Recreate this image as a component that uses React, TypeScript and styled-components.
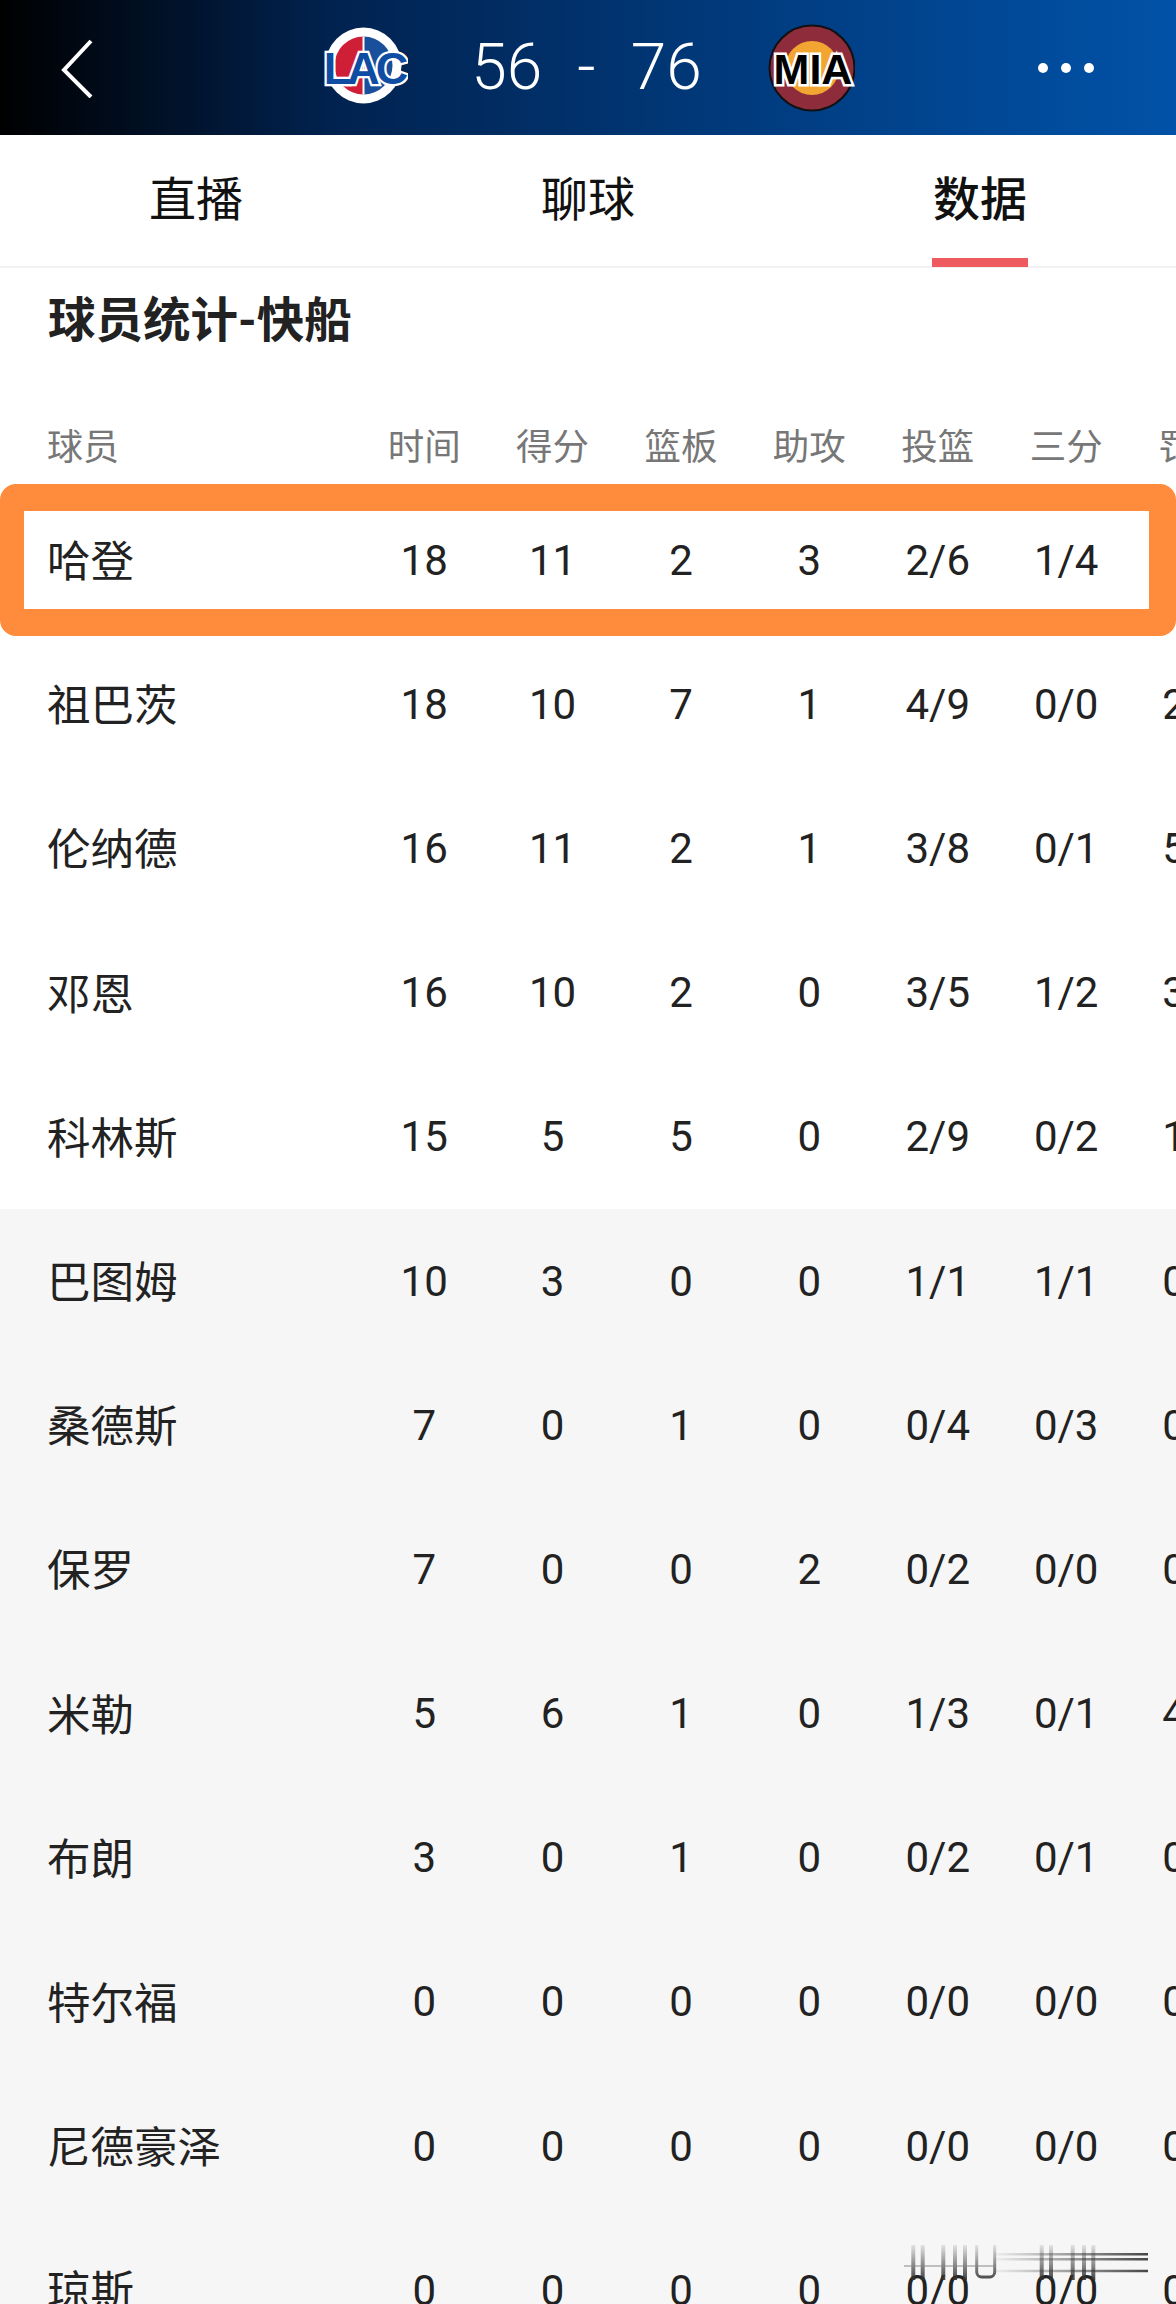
import styled, { createGlobalStyle } from "styled-components";

const GlobalStyle = createGlobalStyle`
    html, body {
        margin: 0;
        padding: 0;
        background: #fff;
    }
    body {
        font-family: Roboto, "Noto Sans CJK SC", sans-serif;
    }
`;

const Page = styled.div`
    position: relative;
    width: 1176px;
    height: 2304px;
    overflow: hidden;
    background: #fff;
`;

// Top bar with the score
const TopBar = styled.header`
    height: 135px;
    display: grid;
    grid-template-columns: 320px 88px 359px 88px 1fr;
    align-items: center;
    background: linear-gradient(90deg, #000 0%, #01224f 28%, #013a7c 62%, #0152a8 100%);
    color: #fff;
`;

const Back = styled.svg`
    width: 36px;
    height: 60px;
    margin-left: 60px;
`;

const Score = styled.div`
    font-size: 64px;
    font-weight: 300;
    text-align: center;
    white-space: pre;
    word-spacing: 2px;
    padding-right: 2px;
`;

const More = styled.div`
    display: flex;
    justify-content: flex-end;
    gap: 13px;
    padding-right: 82px;
`;

const Dot = styled.span`
    width: 10px;
    height: 10px;
    border-radius: 50%;
    background: #fff;
`;

// Tabs
const Tabs = styled.nav`
    height: 133px;
    display: grid;
    grid-template-columns: repeat(3, 392px);
    border-bottom: 2px solid #f1f1f1;
    box-sizing: border-box;
`;

const Tab = styled.div<{ $active?: boolean }>`
    position: relative;
    padding-top: 33px;
    text-align: center;
    font-size: 47px;
    line-height: 64px;
    font-weight: ${(p) => (p.$active ? 500 : 400)};
    color: #111;

    &::after {
        content: "";
        display: ${(p) => (p.$active ? "block" : "none")};
        position: absolute;
        left: 148px;
        bottom: -1px;
        width: 96px;
        height: 9px;
        background: #ee5a5e;
    }
`;

const Title = styled.h2`
    margin: 0;
    padding: 20px 0 0 48px;
    height: 132px;
    box-sizing: border-box;
    font-size: 47.5px;
    line-height: 66px;
    font-weight: 700;
    color: #222;
`;

// Stats table: first column for the name, then fixed-width stat columns
const Row = styled.div<{ $bench?: boolean; $head?: boolean }>`
    position: relative;
    height: ${(p) => (p.$head ? "88px" : "144.2px")};
    display: grid;
    grid-template-columns: 360px repeat(7, 128.4px);
    align-items: center;
    background: ${(p) => (p.$bench ? "#f6f6f6" : "transparent")};
    font-size: ${(p) => (p.$head ? "36.5px" : "42px")};
    color: ${(p) => (p.$head ? "#777" : "#222")};
`;

const Name = styled.div<{ $head?: boolean }>`
    padding: 0 0 ${(p) => (p.$head ? "0" : "3px")} 47px;
    white-space: nowrap;
    font-size: ${(p) => (p.$head ? "36px" : "43.5px")};
`;

const Cell = styled.div`
    text-align: center;
    white-space: nowrap;
`;

// Hand-drawn orange frame lying over the first row
const Highlight = styled.div`
    position: absolute;
    left: 0;
    right: 0;
    top: -4px;
    bottom: -4px;
    border: solid #fe8c3c;
    border-width: 27px 27px 27px 24px;
    border-radius: 16px;
    box-sizing: border-box;
`;

const Watermark = styled.svg`
    position: absolute;
    left: 904px;
    top: 2245px;
    width: 244px;
    height: 35px;
`;

const headers = ["球员", "时间", "得分", "篮板", "助攻", "投篮", "三分", "罚球"];

const players: string[][] = [
    ["哈登", "18", "11", "2", "3", "2/6", "1/4", ""],
    ["祖巴茨", "18", "10", "7", "1", "4/9", "0/0", "2/2"],
    ["伦纳德", "16", "11", "2", "1", "3/8", "0/1", "5/6"],
    ["邓恩", "16", "10", "2", "0", "3/5", "1/2", "3/4"],
    ["科林斯", "15", "5", "5", "0", "2/9", "0/2", "1/2"],
    ["巴图姆", "10", "3", "0", "0", "1/1", "1/1", "0/0"],
    ["桑德斯", "7", "0", "1", "0", "0/4", "0/3", "0/0"],
    ["保罗", "7", "0", "0", "2", "0/2", "0/0", "0/0"],
    ["米勒", "5", "6", "1", "0", "1/3", "0/1", "4/4"],
    ["布朗", "3", "0", "1", "0", "0/2", "0/1", "0/0"],
    ["特尔福", "0", "0", "0", "0", "0/0", "0/0", "0/0"],
    ["尼德豪泽", "0", "0", "0", "0", "0/0", "0/0", "0/0"],
    ["琼斯", "0", "0", "0", "0", "0/0", "0/0", "0/0"],
];

const markFont = "Liberation Sans, sans-serif";

function LacLogo() {
    return (
        <svg width="88" height="88" viewBox="0 0 88 88">
            <circle cx="43.5" cy="41.5" r="38" fill="#fff" />
            <path d="M43.5 12.5a29 29 0 0 0 0 58z" fill="#cf1f36" />
            <path d="M43.5 12.5a29 29 0 0 1 0 58z" fill="#1a4f9c" />
            <path d="M43.5 12.5v58" stroke="#fff" strokeWidth="2" />
            <text x="44" y="60" textAnchor="middle" fontFamily={markFont} fontSize="45" fontWeight="700" fill="#0f4da3" stroke="#fff" strokeWidth="4.5" paintOrder="stroke" letterSpacing="-4">LAC</text>
        </svg>
    );
}

function MiaLogo() {
    return (
        <svg width="88" height="88" viewBox="0 0 88 88">
            <circle cx="45" cy="44" r="42.5" fill="#8f2c3c" stroke="#111" strokeWidth="2" />
            <circle cx="45" cy="44" r="27" fill="#f2a531" />
            <text x="46" y="60" textAnchor="middle" fontFamily={markFont} fontSize="43" fontWeight="700" fill="#000" stroke="#fff" strokeWidth="5" paintOrder="stroke">MIA</text>
        </svg>
    );
}

// The blurred stamp in the bottom right corner, fading out towards the top and the left
function Stamp() {
    const bars = [9.3, 18.7, 39.3, 51, 61, 137.7, 147, 168.7, 180, 189.3];
    const lines = [9.3, 14.3, 26];
    return (
        <Watermark viewBox="0 0 244 35">
            <defs>
                <linearGradient id="barFade" gradientUnits="userSpaceOnUse" x1="0" y1="0" x2="0" y2="35">
                    <stop offset="0" stopColor="#333" stopOpacity="0.1" />
                    <stop offset="1" stopColor="#333" stopOpacity="0.9" />
                </linearGradient>
                <linearGradient id="lineFade" gradientUnits="userSpaceOnUse" x1="91" y1="0" x2="244" y2="0">
                    <stop offset="0" stopColor="#333" stopOpacity="0.04" />
                    <stop offset="1" stopColor="#333" stopOpacity="0.9" />
                </linearGradient>
            </defs>
            {bars.map((x) => (
                <line key={x} x1={x} x2={x} y1="0" y2="35" stroke="url(#barFade)" strokeWidth="4" />
            ))}
            <path d="M72.7 0v27a5 5 0 0 0 5 5h8a5 5 0 0 0 5-5V0" fill="none" stroke="url(#barFade)" strokeWidth="3" />
            <line x1="0" x2="91" y1="21" y2="21" stroke="#888" strokeOpacity="0.5" strokeWidth="2" />
            {lines.map((y) => (
                <line key={y} x1="91" x2="244" y1={y} y2={y} stroke="url(#lineFade)" strokeWidth="2.5" />
            ))}
        </Watermark>
    );
}

export default function App() {
    return (
        <Page>
            <GlobalStyle />
            <TopBar>
                <Back viewBox="0 0 36 60">
                    <path d="M31 3 4 32l27 27" fill="none" stroke="#fff" strokeWidth="4" />
                </Back>
                <LacLogo />
                <Score>{"56  -  76"}</Score>
                <MiaLogo />
                <More>
                    <Dot />
                    <Dot />
                    <Dot />
                </More>
            </TopBar>
            <Tabs>
                <Tab>直播</Tab>
                <Tab>聊球</Tab>
                <Tab $active>数据</Tab>
            </Tabs>
            <Title>球员统计-快船</Title>
            <Row $head>
                <Name $head>{headers[0]}</Name>
                {headers.slice(1).map((h) => (
                    <Cell key={h}>{h}</Cell>
                ))}
            </Row>
            {players.map((p, i) => (
                <Row key={p[0]} $bench={i >= 5}>
                    <Name>{p[0]}</Name>
                    {p.slice(1).map((v, j) => (
                        <Cell key={j}>{v}</Cell>
                    ))}
                    {i === 0 && <Highlight />}
                </Row>
            ))}
            <Stamp />
        </Page>
    );
}
